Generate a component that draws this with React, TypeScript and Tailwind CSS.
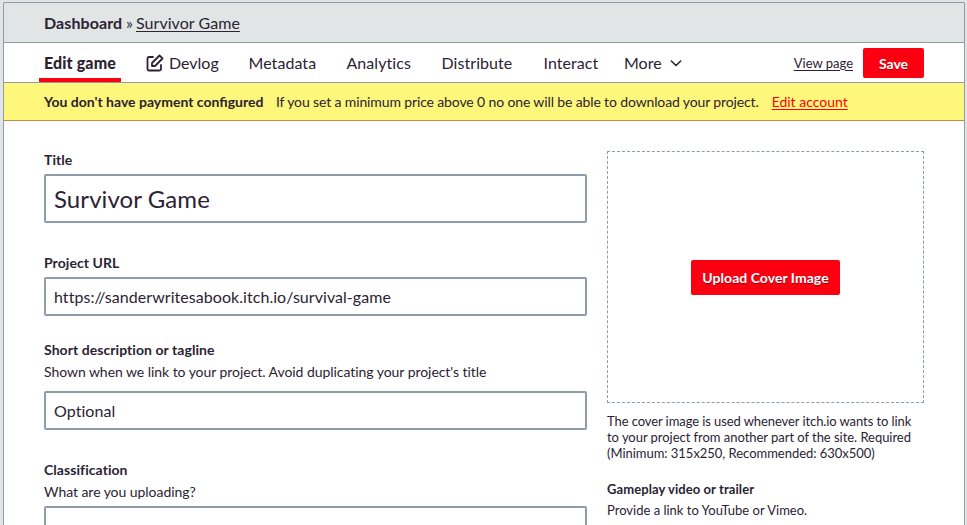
import React from "react";

const navItems = [
  { label: "Metadata", cls: "w-[68px]" },
  { label: "Analytics", cls: "w-[65px]" },
  { label: "Distribute", cls: "w-[72px]" },
  { label: "Interact", cls: "w-[56px]" },
];

function Label({ children }: { children: React.ReactNode }) {
  return <div className="h-[22px] text-[14px] leading-[22px] font-bold tracking-[0.06px] whitespace-nowrap">{children}</div>;
}

function Hint({ children }: { children: React.ReactNode }) {
  return <div className="h-[22px] text-[14px] leading-[22px] tracking-[-0.05px] whitespace-nowrap">{children}</div>;
}

function Field({ className, children }: { className: string; children?: React.ReactNode }) {
  return (
    <div className={"flex items-center rounded-[2px] border-2 border-[#8f9dab] bg-white px-2 whitespace-nowrap " + className}>
      {children}
    </div>
  );
}

function EditIcon() {
  return (
    <svg width="18" height="18" viewBox="0 0 24 24" fill="none" stroke="currentColor" strokeWidth="2.4" strokeLinecap="round" strokeLinejoin="round">
      <path d="M20 14.660V20a2 2 0 0 1-2 2H4a2 2 0 0 1-2-2V6a2 2 0 0 1 2-2h5.340" />
      <polygon points="18 2 22 6 12 16 8 16 8 12 18 2" />
    </svg>
  );
}

export default function App() {
  return (
    <div className="h-[525px] w-[967px] overflow-hidden bg-[#e1e5e6] pt-[2px] pl-[3px] font-['Lato','Liberation_Sans',sans-serif] text-[#2b2333]">
      <div className="h-[560px] w-[962px] rounded-t-[1px] border border-[#8f9dab] bg-white">
        <header className="flex h-10 items-center border-b border-[#8f9dab] bg-[#e1e5e6] pl-10 text-[16px] whitespace-nowrap">
          <span className="w-[78px] font-bold tracking-[0.1px]">Dashboard</span>
          <span className="ml-1 w-[10px]">»</span>
          <a className="tracking-[0.05px] underline underline-offset-2">Survivor Game</a>
        </header>

        <nav className="flex h-10 items-center border-b border-[#8f9dab] pr-10 pl-[35px] text-[16px] whitespace-nowrap">
          <div className="flex h-[39px] w-[82px] items-center justify-center border-b-4 border-[#fa0010] pt-1 font-black tracking-[0.15px]">Edit game</div>
          <div className="ml-[25px] flex items-center">
            <EditIcon />
            <span className="ml-[5px] w-[50px]">Devlog</span>
          </div>
          <div className="ml-[29.5px] flex gap-[30px] tracking-[0.06px]">
            {navItems.map((n) => (
              <span key={n.label} className={n.cls}>{n.label}</span>
            ))}
          </div>
          <span className="ml-[24.5px] w-[39px]">More</span>
          <svg className="ml-[7px]" width="12" height="12" viewBox="0 0 12 12" fill="none" stroke="currentColor" strokeWidth="1.600" strokeLinecap="round" strokeLinejoin="round">
            <path d="M1.300 4 6 8.500 10.700 4" />
          </svg>
          <a className="ml-auto pt-0.5 text-[13px] underline underline-offset-2">View page</a>
          <div className="ml-[10px] flex h-[30px] w-[61px] items-center justify-center rounded-[2px] bg-[#fa0010] pt-px text-[14px] font-bold text-white [text-shadow:0_1px_0_rgba(60,0,20,0.4)]">Save</div>
        </nav>

        <div className="flex h-[38px] items-center border-b border-[#c98a3c] bg-[#fff77c] pl-10 text-[14px] whitespace-nowrap">
          <span className="w-[232px] font-bold">You don't have payment configured</span>
          <span className="tracking-[-0.13px]">If you set a minimum price above 0 no one will be able to download your project.</span>
          <a className="ml-[13px] text-[#fa0010] underline underline-offset-2">Edit account</a>
        </div>

        <main className="flex px-10">
          <section className="w-[543px] pt-7">
            <Label>Title</Label>
            <Field className="mt-[3px] h-[49px] text-[24px] tracking-[0.08px]">Survivor Game</Field>
            <div className="mt-[29px]">
              <Label>Project URL</Label>
              <Field className="mt-[3px] h-[39px] text-[16px] tracking-[0.05px]">https://sanderwritesabook.itch.io/survival-game</Field>
            </div>
            <div className="mt-[23px]">
              <Label>Short description or tagline</Label>
              <Hint>Shown when we link to your project. Avoid duplicating your project's title</Hint>
              <Field className="mt-2 h-[39px] text-[16px] tracking-[0.06px]">Optional</Field>
            </div>
            <div className="mt-[29px]">
              <Label>Classification</Label>
              <Hint>What are you uploading?</Hint>
              <Field className="mt-[3px] h-[39px]" />
            </div>
          </section>

          <aside className="ml-5 w-[317px] pt-[30px]">
            <div className="flex h-[252px] items-center justify-center border border-dashed border-[#8f9dab]">
              <div className="flex h-[35px] w-[149px] items-center justify-center rounded-[2px] bg-[#fa0010] text-[14px] font-bold tracking-[0.04px] whitespace-nowrap text-white [text-shadow:0_1px_0_rgba(60,0,20,0.5)]">
                Upload Cover Image
              </div>
            </div>
            <p className="mt-[10px] text-[13px] leading-4 whitespace-nowrap">
              <span className="tracking-[-0.085px]">The cover image is used whenever itch.io wants to link</span>
              <br />
              <span className="tracking-[-0.04px]">to your project from another part of the site. Required</span>
              <br />
              <span className="tracking-[-0.03px]">(Minimum: 315x250, Recommended: 630x500)</span>
            </p>
            <div className="mt-[17px] text-[13px] leading-[22px] font-bold tracking-[0.08px]">Gameplay video or trailer</div>
            <div className="text-[13px] leading-[21px]">Provide a link to YouTube or Vimeo.</div>
          </aside>
        </main>
      </div>
    </div>
  );
}
